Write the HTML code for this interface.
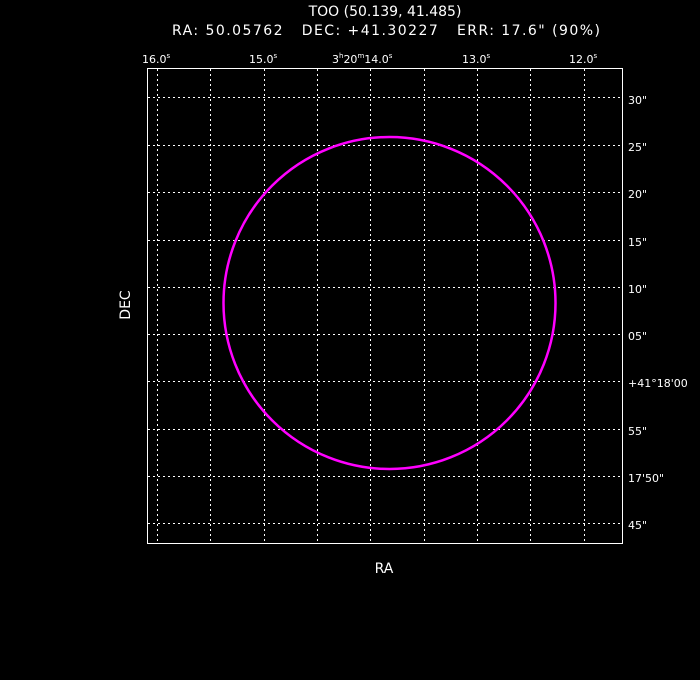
<!DOCTYPE html><html><head><style>body{margin:0;background:#000;}svg{display:block}text{font-family:"DejaVu Sans","Liberation Sans",sans-serif;fill:#fff;white-space:pre}</style></head><body>
<svg width="700" height="680" viewBox="0 0 700 680">
<text x="385" y="16" font-size="14" text-anchor="middle">TOO (50.139, 41.485)</text>
<text x="386" y="35" font-size="14" text-anchor="middle" textLength="428">RA: 50.05762   DEC: +41.30227   ERR: 17.6" (90%)</text>
<g font-size="11">
<text x="142" y="63">16.0<tspan font-size="7" dy="-5">s</tspan></text>
<text x="249" y="63">15.0<tspan font-size="7" dy="-5">s</tspan></text>
<text x="332" y="63">3<tspan font-size="7" dy="-5">h</tspan><tspan dy="5">20</tspan><tspan font-size="7" dy="-5">m</tspan><tspan dy="5">14.0</tspan><tspan font-size="7" dy="-5">s</tspan></text>
<text x="462" y="63">13.0<tspan font-size="7" dy="-5">s</tspan></text>
<text x="569" y="63">12.0<tspan font-size="7" dy="-5">s</tspan></text>
<text x="628" y="104">30"</text>
<text x="628" y="151">25"</text>
<text x="628" y="198">20"</text>
<text x="628" y="246">15"</text>
<text x="628" y="293">10"</text>
<text x="628" y="340">05"</text>
<text x="628" y="387">+41°18'00</text>
<text x="628" y="435">55"</text>
<text x="628" y="482">17'50"</text>
<text x="628" y="529">45"</text>
</g>
<text x="384" y="573" font-size="14" text-anchor="middle">RA</text>
<text transform="translate(130,305) rotate(-90)" font-size="14" text-anchor="middle">DEC</text>
<g stroke="#fff" stroke-width="1" stroke-dasharray="2,3">
<path d="M157.5 69V543M210.5 69V543M264.5 69V543M317.5 69V543M370.5 69V543M424.5 69V543M477.5 69V543M530.5 69V543M584.5 69V543"/>
<path d="M148 97.5H622M148 145.5H622M148 192.5H622M148 240.5H622M148 287.5H622M148 334.5H622M148 381.5H622M148 429.5H622M148 476.5H622M148 523.5H622"/>
</g>
<rect x="147.5" y="68.5" width="475" height="475" fill="none" stroke="#fff"/>
<ellipse cx="389.5" cy="303" rx="166" ry="166" fill="none" stroke="#f0f" stroke-width="2.5"/>
</svg>
</body></html>
